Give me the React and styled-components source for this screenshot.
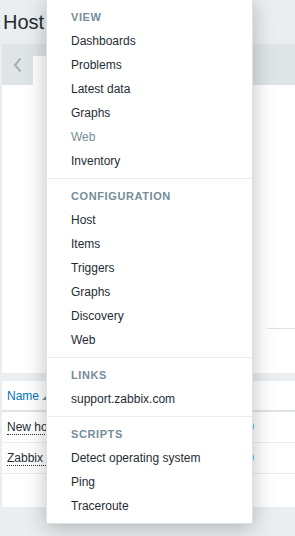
import React from "react";
import styled, { createGlobalStyle } from "styled-components";

const GlobalStyle = createGlobalStyle`
  html, body { margin: 0; padding: 0; }
  body {
    background: #ebeef0;
    font-family: "Liberation Sans", Arial, sans-serif;
    font-size: 12px;
    color: #1f2c33;
  }
  * { box-sizing: border-box; }
`;

const Page = styled.div`
  position: relative;
  width: 295px;
  height: 536px;
  overflow: hidden;
`;

const Header = styled.header`
  height: 44px;
  padding-left: 3px;
  display: flex;
  align-items: center;
`;

const Title = styled.h1`
  margin: 0;
  font-size: 20px;
  font-weight: normal;
  color: #1f2c33;
  line-height: 24px;
`;

const FilterArea = styled.section`
  margin-left: 2px;
  display: flex;
  flex-direction: column;
`;

const TabBar = styled.div`
  height: 41px;
  background: #dfe4e7;
  display: flex;
  align-items: flex-end;
`;

const NavButton = styled.button`
  width: 31px;
  height: 41px;
  border: 0;
  padding: 0;
  background: transparent;
  display: flex;
  align-items: center;
  justify-content: center;
  color: #a3b0b8;
`;

const Tab = styled.div`
  width: 180px;
  height: 29px;
  background: #ffffff;
`;

const FilterPanel = styled.div`
  height: 288px;
  background: #ffffff;
  padding-top: 243px;
  display: flex;
  flex-direction: column;
`;

const FormDivider = styled.div`
  margin-left: 265px;
  height: 1px;
  background: #dfe4e7;
`;

const TableWrap = styled.div`
  margin: 8px 0 0 2px;
  background: #ffffff;
  padding-bottom: 33px;
`;

const Table = styled.table`
  border-collapse: collapse;
  width: 320px;
  table-layout: fixed;
`;

const Th = styled.th`
  height: 30px;
  padding: 0 5px;
  text-align: ${(p) => (p.$right ? "right" : "left")};
  font-weight: normal;
  border-bottom: 2px solid #dfe4e7;
  color: #0275b8;
  width: ${(p) => p.$w}px;
`;

const Td = styled.td`
  height: 31px;
  padding: 0 ${(p) => (p.$right ? 3 : 5)}px 0 5px;
  text-align: ${(p) => (p.$right ? "right" : "left")};
  border-bottom: 1px solid #ebeef0;
  white-space: nowrap;
  overflow: hidden;
`;

const SortLink = styled.span`
  color: #0275b8;
  display: inline-flex;
  align-items: flex-end;
`;

const SortArrow = styled.span`
  display: inline-block;
  width: 0;
  height: 0;
  margin: 0 0 3px 3px;
  border-left: 4px solid transparent;
  border-bottom: 4px solid #768d99;
`;

const HostLink = styled.span`
  color: #1f2c33;
  border-bottom: 1px dotted #1f2c33;
`;

const CellLink = styled.span`
  color: #0275b8;
`;

const Menu = styled.nav`
  position: absolute;
  left: 46px;
  top: -1px;
  width: 207px;
  background: #ffffff;
  border: 1px solid #dde2e5;
  box-shadow: 0 4px 20px rgba(0, 0, 0, 0.25);
  padding: 0;
`;

const Section = styled.div`
  padding: 5px 0;
  & + & {
    border-top: 1px solid #ebeef0;
  }
`;

const SectionTitle = styled.h3`
  margin: 0;
  height: 24px;
  line-height: 24px;
  padding-left: 24px;
  font-size: 11px;
  font-weight: bold;
  letter-spacing: 0.6px;
  text-transform: uppercase;
  color: #768d99;
`;

const Item = styled.div`
  height: 24px;
  line-height: 24px;
  padding-left: 24px;
  font-size: 12px;
  color: ${(p) => (p.$disabled ? "#768d99" : "#1f2c33")};
`;

const sections = [
  {
    title: "View",
    items: [
      { label: "Dashboards" },
      { label: "Problems" },
      { label: "Latest data" },
      { label: "Graphs" },
      { label: "Web", disabled: true },
      { label: "Inventory" },
    ],
  },
  {
    title: "Configuration",
    items: [
      { label: "Host" },
      { label: "Items" },
      { label: "Triggers" },
      { label: "Graphs" },
      { label: "Discovery" },
      { label: "Web" },
    ],
  },
  { title: "Links", items: [{ label: "support.zabbix.com" }] },
  {
    title: "Scripts",
    items: [
      { label: "Detect operating system" },
      { label: "Ping" },
      { label: "Traceroute" },
    ],
  },
];

const hosts = ["New host", "Zabbix server"];

export default function App() {
  return (
    <Page>
      <GlobalStyle />
      <Header>
        <Title>Host</Title>
      </Header>
      <FilterArea>
        <TabBar>
          <NavButton aria-label="Previous">
            <svg width="9" height="16" viewBox="0 0 9 16">
              <path
                d="M7.5 1.5 L2 8 L7.5 14.5"
                fill="none"
                stroke="currentColor"
                strokeWidth="2"
              />
            </svg>
          </NavButton>
          <Tab />
        </TabBar>
        <FilterPanel>
          <FormDivider />
        </FilterPanel>
      </FilterArea>
      <TableWrap>
        <Table>
          <thead>
            <tr>
              <Th $w={180}>
                <SortLink>
                  Name
                  <SortArrow />
                </SortLink>
              </Th>
              <Th $w={75} $right>
                <CellLink>Items</CellLink>
              </Th>
              <Th $w={65} />
            </tr>
          </thead>
          <tbody>
            {hosts.map((h) => (
              <tr key={h}>
                <Td>
                  <HostLink>{h}</HostLink>
                </Td>
                <Td $right>
                  <CellLink>Items 20</CellLink>
                </Td>
                <Td />
              </tr>
            ))}
          </tbody>
        </Table>
      </TableWrap>
      <Menu>
        {sections.map((s) => (
          <Section key={s.title}>
            <SectionTitle>{s.title}</SectionTitle>
            {s.items.map((it, i) => (
              <Item key={i} $disabled={it.disabled}>
                {it.label}
              </Item>
            ))}
          </Section>
        ))}
      </Menu>
    </Page>
  );
}
